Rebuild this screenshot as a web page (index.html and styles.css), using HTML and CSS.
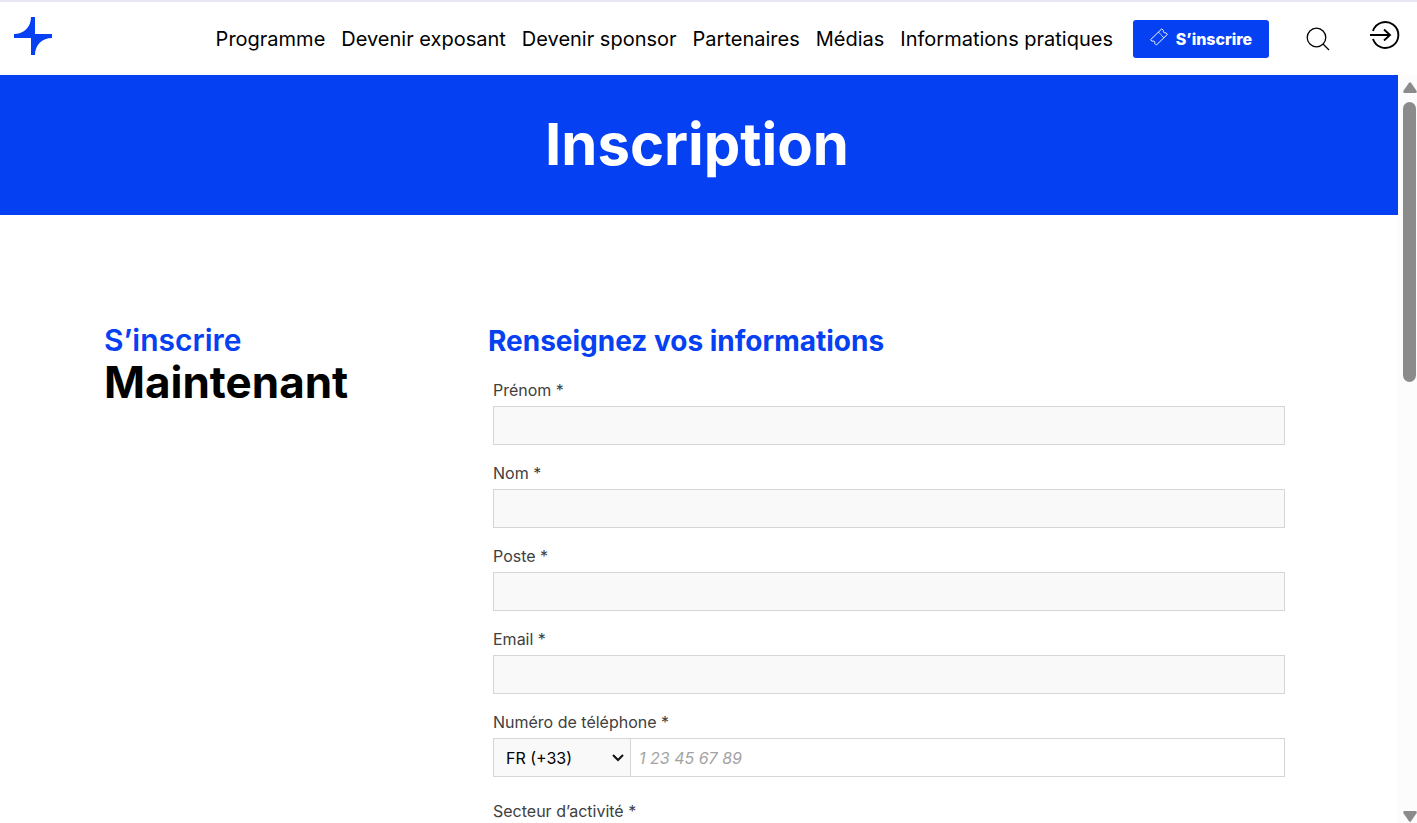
FILE: index.html
```html
<!DOCTYPE html>
<html lang="fr">
<head>
<meta charset="utf-8">
<meta name="viewport" content="width=device-width, initial-scale=1">
<title>Inscription</title>
<link rel="stylesheet" href="styles.css">
</head>
<body>
<header class="header">
  <a class="logo" href="#" aria-label="Accueil">
    <svg viewBox="0 0 38 38" width="38" height="38" fill="#0540f2"><path d="M17 0h4v17h17v4C28 21 21 28 21 38h-4V21H0v-4C10 17 17 10 17 0z"/></svg>
  </a>
  <nav class="nav">
    <a href="#">Programme</a>
    <a href="#">Devenir exposant</a>
    <a href="#">Devenir sponsor</a>
    <a href="#">Partenaires</a>
    <a href="#">Médias</a>
    <a href="#">Informations pratiques</a>
  </nav>
  <a class="register" href="#">
    <svg viewBox="0 0 18 18" width="18" height="18" fill="none" stroke="currentColor" stroke-width="1" stroke-linejoin="round" stroke-linecap="round"><path d="M.8 11.500L11.800 .8l1.700 1.700c-.6 1.600.4 2.600 2.200 2.200L17.400 6.400 6.400 17l-1.700-1.700c.6-1.600-.4-2.600-2.200-2.200z"/><path d="M8.800 4.500l1 1M10.800 6.500l.8.800M12.600 8.400l1 1"/></svg>
    <span>S’inscrire</span>
  </a>
  <button class="icon-button search" type="button" aria-label="Rechercher">
    <svg viewBox="0 0 24 24" width="24" height="24" fill="none" stroke="currentColor" stroke-width="1.300"><circle cx="10.500" cy="10.500" r="9.300"/><path d="M17 17l6 6"/></svg>
  </button>
  <button class="icon-button login" type="button" aria-label="Se connecter">
    <svg viewBox="0 0 30 30" width="30" height="30" fill="none" stroke="currentColor" stroke-width="1.900"><path d="M3 11A13 13 0 1 1 3 19M0 15h20M14 9.500l6 5.500-6 5.500"/></svg>
  </button>
</header>
<div class="viewport">
  <main class="page">
    <section class="hero"><h1>Inscription</h1></section>
    <div class="content">
      <h2 class="intro"><span class="intro-top">S’inscrire</span><span class="intro-main">Maintenant</span></h2>
      <form class="form">
        <h3>Renseignez vos informations</h3>
        <div class="field"><label for="prenom">Prénom *</label><input class="box" id="prenom" type="text"></div>
        <div class="field"><label for="nom">Nom *</label><input class="box" id="nom" type="text"></div>
        <div class="field"><label for="poste">Poste *</label><input class="box" id="poste" type="text"></div>
        <div class="field"><label for="email">Email *</label><input class="box" id="email" type="email"></div>
        <div class="field field-phone">
          <label for="phone">Numéro de téléphone *</label>
          <div class="phone">
            <div class="country">
              <select id="country" aria-label="Indicatif"><option>FR (+33)</option></select>
              <svg class="chevron" viewBox="0 0 12 8" width="12" height="8" fill="none" stroke="#111" stroke-width="2"><path d="M1 1l5 5 5-5"/></svg>
            </div>
            <input id="phone" type="tel" placeholder="1 23 45 67 89">
          </div>
        </div>
        <div class="field"><label for="secteur">Secteur d’activité *</label><input class="box" id="secteur" type="text"></div>
      </form>
    </div>
  </main>
  <div class="scrollbar" aria-hidden="true">
    <svg viewBox="0 0 14 11" width="14" height="11" fill="#8b8b8b"><path d="M6 .8q1-1.200 2 0l5.500 8q.8 2.200-1 2.200h-11q-1.800 0-1-2.200z"/></svg>
    <div class="track"><div class="thumb"></div></div>
    <svg viewBox="0 0 14 11" width="14" height="11" fill="#8b8b8b"><path d="M6 10.200q1 1.200 2 0l5.500-8q.8-2.200-1-2.200h-11q-1.800 0-1 2.200z"/></svg>
  </div>
</div>
</body>
</html>
```
FILE: styles.css
```css
* { box-sizing: border-box; }
body {
  margin: 0;
  height: 100vh;
  display: flex;
  flex-direction: column;
  overflow: hidden;
  background: #fff;
  color: #000;
  font-family: Inter, "Liberation Sans", sans-serif;
}
h1, h2, h3 { margin: 0; }
a { color: inherit; text-decoration: none; }
input, select, button { font: inherit; color: inherit; border-radius: 0; }
svg { display: block; flex: none; }

.header {
  flex: none;
  display: flex;
  align-items: center;
  height: 75px;
  padding: 1px 17px 0 14px;
  border-top: 2px solid #e6e7f2;
}
.logo { padding-bottom: 6px; }
.nav {
  flex: 1;
  display: flex;
  justify-content: flex-end;
  gap: 16px;
  padding-right: 20px;
  font-size: 20px;
  line-height: 24px;
  white-space: nowrap;
}
.register {
  display: flex;
  align-items: center;
  justify-content: center;
  gap: 8px;
  width: 136px;
  height: 38px;
  border-radius: 3px;
  background: #0540f2;
  color: #fff;
  font-size: 16px;
  font-weight: 800;
}
.register svg { margin-bottom: 4px; }
.icon-button { padding: 0; border: 0; background: none; cursor: pointer; }
.search { margin-left: 37px; }
.login { margin-left: 40px; padding-bottom: 8px; }

.viewport { flex: 1; min-height: 0; display: flex; }
.page { flex: 1; overflow-y: auto; scrollbar-width: none; }
.hero {
  display: flex;
  align-items: center;
  justify-content: center;
  height: 140px;
  padding: 0 4px 2px 0;
  background: #0540f2;
  color: #fff;
}
.hero h1 { font-size: 58px; line-height: 64px; font-weight: 700; }

.content {
  display: grid;
  grid-template-columns: 384px 1fr;
  padding: 107px 113px 40px 104px;
}
.intro { display: flex; flex-direction: column; }
.intro-top { color: #0540f2; font-size: 30px; line-height: 36px; font-weight: 600; }
.intro-main { font-size: 44px; line-height: 48px; font-weight: 700; }
.form h3 {
  margin-bottom: 20px;
  color: #0540f2;
  font-size: 28px;
  line-height: 38px;
  font-weight: 700;
}
.field { margin: 0 0 18px 5px; }
.field-phone { margin-bottom: 24px; }
.field label {
  display: block;
  margin-bottom: 5px;
  color: #404040;
  font-size: 16px;
  line-height: 21px;
}
.box, .phone {
  display: flex;
  width: 100%;
  height: 39px;
  border: 1px solid #d6d6d6;
  background: #f9f9f9;
}
.box { padding: 0 8px; }
.country {
  display: grid;
  align-items: center;
  width: 137px;
  border-right: 1px solid #d6d6d6;
}
.country select {
  grid-area: 1 / 1;
  height: 37px;
  padding: 0 30px 0 12px;
  border: 0;
  appearance: none;
  background: none;
  font-size: 16px;
}
.chevron { grid-area: 1 / 1; justify-self: end; margin-right: 6px; pointer-events: none; }
.phone input {
  flex: 1;
  min-width: 0;
  padding: 0 8px;
  border: 0;
  background: #fff;
  font-size: 16px;
}
.phone input::placeholder { color: #a3a3a3; font-style: italic; }

.scrollbar {
  flex: none;
  display: flex;
  flex-direction: column;
  align-items: center;
  width: 19px;
  padding: 7px 0 1px 4px;
  background: #fcfcfc;
}
.track { flex: 1; width: 13px; padding: 9px 0; }
.thumb { height: 40%; border-radius: 7px; background: #8b8b8b; }
```
